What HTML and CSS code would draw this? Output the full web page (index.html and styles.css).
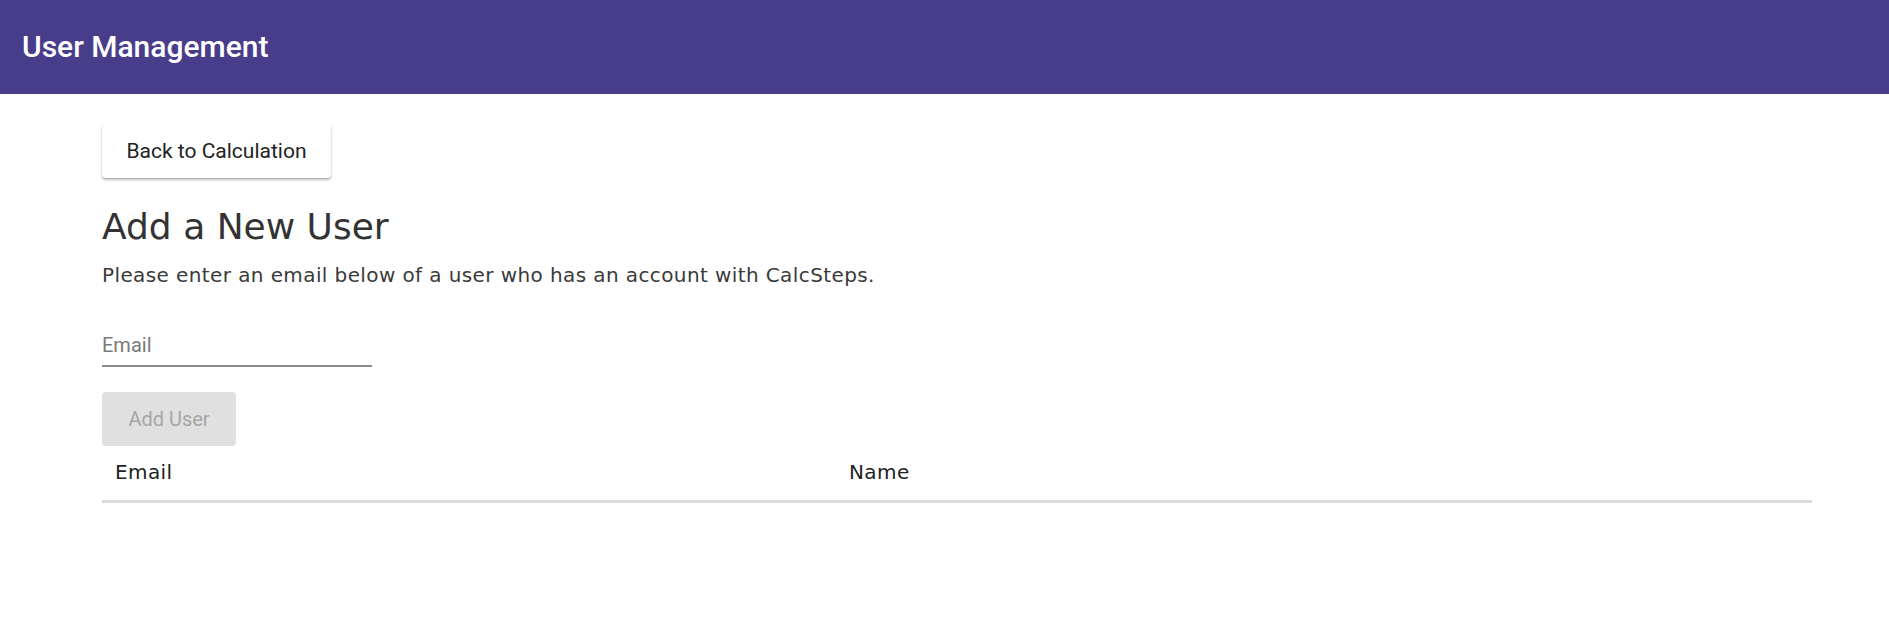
FILE: index.html
```html
<!DOCTYPE html>
<html lang="en">
<head>
<meta charset="utf-8">
<title>User Management</title>
<link rel="stylesheet" href="styles.css">
</head>
<body>
<header class="topbar">
  <h1 class="topbar-title">User Management</h1>
</header>
<main class="page">
  <button class="btn btn-raised" type="button">Back to Calculation</button>
  <h2 class="section-title">Add a New User</h2>
  <p class="section-text">Please enter an email below of a user who has an account with CalcSteps.</p>
  <div class="field">
    <input class="field-input" type="email" placeholder="Email">
  </div>
  <button class="btn btn-disabled" type="button" disabled>Add User</button>
  <div class="table">
    <div class="table-head">
      <div class="table-cell">Email</div>
      <div class="table-cell">Name</div>
    </div>
  </div>
</main>
</body>
</html>
```

FILE: styles.css
```css
html, body {
  margin: 0;
  padding: 0;
  background: #ffffff;
}

body {
  font-family: "DejaVu Sans", "Open Sans", sans-serif;
  color: #333333;
}

.topbar {
  height: 94px;
  background: #483d8b;
  display: flex;
  align-items: center;
  padding-left: 22px;
  box-sizing: border-box;
}

.topbar-title {
  margin: 0;
  font-family: Roboto, "Liberation Sans", sans-serif;
  font-weight: 500;
  font-size: 30px;
  line-height: 34px;
  color: #ffffff;
}

.page {
  padding: 30px 77px 0 102px;
  display: flex;
  flex-direction: column;
  align-items: flex-start;
}

.btn {
  font-family: Roboto, "Liberation Sans", sans-serif;
  font-size: 21px;
  line-height: 24px;
  height: 54px;
  border: none;
  border-radius: 4px;
  padding: 0;
  cursor: pointer;
}

.btn-raised {
  width: 229px;
  background: #ffffff;
  color: #222222;
  box-shadow: 0 2px 3px rgba(0, 0, 0, 0.25), 0 1px 1px rgba(0, 0, 0, 0.12);
}

.btn-disabled {
  width: 134px;
  margin-top: 25px;
  font-size: 20px;
  background: #e0e0e0;
  color: #a6a6a6;
  cursor: default;
}

.section-title {
  margin: 27px 0 0;
  font-size: 36px;
  line-height: 44px;
  font-weight: 400;
  color: #333333;
}

.section-text {
  margin: 12px 0 0;
  font-size: 20px;
  letter-spacing: 0.4px;
  line-height: 28px;
  color: #3a3a3a;
}

.field {
  margin-top: 44px;
  width: 270px;
}

.field-input {
  display: block;
  width: 100%;
  box-sizing: border-box;
  height: 34px;
  padding: 0 0 8px 0;
  border: none;
  border-bottom: 2px solid #8c8c8c;
  font-family: Roboto, "Liberation Sans", sans-serif;
  font-size: 20px;
  line-height: 24px;
  color: #333333;
  background: transparent;
  outline: none;
}

.field-input::placeholder {
  color: #7a7a7a;
}

.table {
  align-self: stretch;
  margin-top: 12px;
}

.table-head {
  display: grid;
  grid-template-columns: 734px 1fr;
  border-bottom: 3px solid #dcdcdc;
}

.table-cell {
  padding: 0 13px 14px;
  font-size: 20px;
  letter-spacing: 0.4px;
  line-height: 28px;
  font-weight: 400;
  color: #222222;
}
```
